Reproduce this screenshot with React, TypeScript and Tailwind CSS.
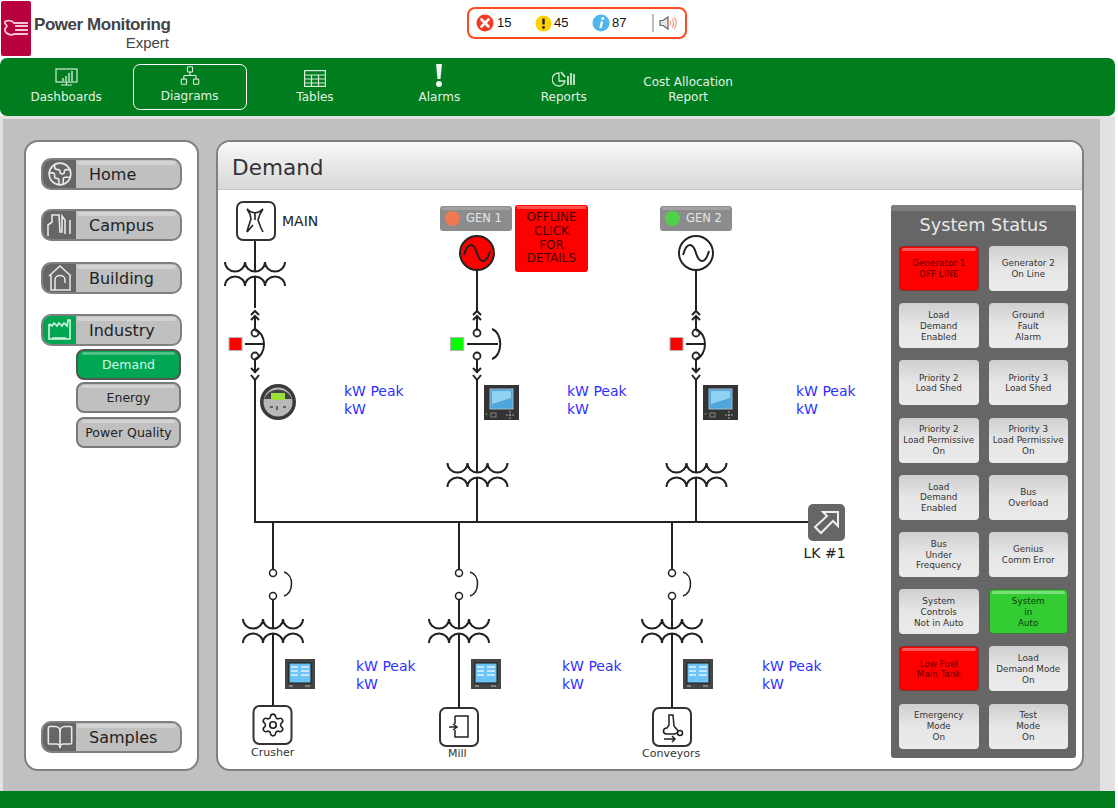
import { Settings, BookOpen, Earth, Network } from 'lucide-react';

const DEJA = 'font-["DejaVu_Sans",sans-serif]';

const SideIconCampus = () => (
  <svg width="26" height="24" viewBox="0 0 26 24" fill="none" stroke="#e8e8e8" strokeWidth="1.6">
    <path d="M1 23V12l4-3V2h7l1 17h2V3l3 4v14M23 7v14" />
  </svg>
);

const SideIconHouse = () => (
  <svg width="26" height="26" viewBox="0 0 26 26" fill="none" stroke="#e8e8e8" strokeWidth="1.5">
    <path d="M2 11 13 1l11 10M4 10v15h19V10M8 25V15c0-6 10-6 10 0v3" />
  </svg>
);

const SideIconFactory = () => (
  <svg width="26" height="24" viewBox="0 0 26 24" fill="none" stroke="#d8f5e2" strokeWidth="1.6">
    <path d="M2 6v15h21V2h-2l-1 6-3-3-2 3-3-3-2 3-3-3-2 3-3-2" />
    <path d="M5 20h14" />
  </svg>
);

const SideButton = ({ label, icon, active }: { label: string; icon: React.ReactNode; active?: boolean }) => (
  <div className="relative flex h-[32px] w-[141px] rounded-[10px] border-2 border-[#808080] bg-[#c0c0c0] overflow-hidden">
    <div className={`flex w-[33px] shrink-0 items-center justify-center ${active ? 'bg-[#00a651]' : 'bg-[#666666]'}`}>
      {icon}
    </div>
    <div className={`flex-1 pl-[13px] text-[16px] leading-[30px] text-[#222222] ${DEJA}`}>{label}</div>
    <div className="absolute left-[34px] right-[4px] top-[1px] h-[4px] rounded-sm bg-white/30" />
  </div>
);

const SubButton = ({ label, active, className }: { label: string; active?: boolean; className?: string }) => (
  <div
    className={`relative h-[31px] w-[105px] rounded-[8px] border-2 border-[#7a7a7a] text-center text-[12.5px] leading-[27px] ${DEJA} ${
      active ? 'bg-[#00a651] text-[#d5f5e0] border-[#555555]' : 'bg-[#c0c0c0] text-[#222222]'
    } ${className ?? ''}`}
  >
    {label}
    <div className="absolute left-[4px] right-[4px] top-[1px] h-[3px] rounded-sm bg-white/30" />
  </div>
);

const NavItem = ({ label, icon, selected }: { label: string; icon?: React.ReactNode; selected?: boolean }) => (
  <div className="flex h-[46px] w-[124.4px] justify-center">
    <div
      className={`flex h-[46px] w-[114px] flex-col items-center justify-end pb-[5px] text-[12px] leading-[15px] text-[#e4f2e4] ${DEJA} ${
        selected ? 'mr-[2px] rounded-[7px] border border-white pb-[4px]' : ''
      }`}
    >
      {icon}
      <span className="mt-[3px] text-center">{label}</span>
    </div>
  </div>
);

const Wire = (p: { d: string; w?: number }) => (
  <path d={p.d} fill="none" stroke="#222222" strokeWidth={p.w ?? 2} />
);

const Coil = ({ x, y }: { x: number; y: number }) => (
  <g>
    <Wire d={`M${x - 30} ${y}a10 9.5 0 0 0 20 0a10 9.5 0 0 0 20 0a10 9.5 0 0 0 20 0`} />
    <Wire d={`M${x - 30} ${y + 24}a10 9.5 0 0 1 20 0a10 9.5 0 0 1 20 0a10 9.5 0 0 1 20 0`} />
  </g>
);

// draw-out breaker, open swings the arc away from the line
const Breaker = ({ x, open }: { x: number; open?: boolean }) => (
  <g>
    <Wire d={`M${x - 4} 315l4-4l4 4M${x - 4} 320l4-4l4 4M${x} 316v13`} />
    <circle cx={x} cy={333} r={3.5} fill="#fff" stroke="#222222" strokeWidth={1.8} />
    <circle cx={x} cy={356} r={3.5} fill="#fff" stroke="#222222" strokeWidth={1.8} />
    {open ? (
      <>
        <Wire d={`M${x - 10} 344h31`} />
        <Wire d={`M${x + 15} 329c11 4 11 26 0 30`} />
      </>
    ) : (
      <>
        <Wire d={`M${x - 10} 344h18`} />
        <Wire d={`M${x} 330c12 3 12 25 0 29`} />
      </>
    )}
    <Wire d={`M${x} 360v13M${x - 4} 368l4 4l4-4M${x - 4} 375l4 5l4-5`} />
  </g>
);

const Disconnect = ({ x }: { x: number }) => (
  <g>
    <circle cx={x} cy={573} r={3.5} fill="#fff" stroke="#222222" strokeWidth={1.5} />
    <circle cx={x} cy={596} r={3.5} fill="#fff" stroke="#222222" strokeWidth={1.5} />
    <Wire d={`M${x + 11} 572c10 3 10 20 0 24`} w={1.5} />
  </g>
);

const Generator = ({ x, fill }: { x: number; fill: string }) => (
  <g>
    <circle cx={x} cy={253} r={17} fill={fill} stroke="#222222" strokeWidth={2} />
    <Wire d={`M${x - 13} 255c4-14 10-12 13-2s9 12 13-2`} />
  </g>
);

const StatusSquare = ({ x, fill }: { x: number; fill: string }) => (
  <rect x={x} y={337.5} width={13} height={13} fill={fill} stroke="#b5b5b5" strokeWidth={1} />
);

const LargeMeter = ({ x }: { x: number }) => (
  <g>
    <rect x={x} y={385} width={35} height={35} fill="#333333" />
    <rect x={x + 6} y={389} width={23} height={20} fill="#4fa6dc" stroke="#9fb8c8" strokeWidth={1} />
    <path d={`M${x + 8} 391h19v7l-19 6z`} fill="#93d1f2" />
    <rect x={x + 7} y={413} width={5} height={4} fill="none" stroke="#999999" strokeWidth={0.8} />
    <circle cx={x + 2.5} cy={414} r={0.8} fill="#66dd44" />
    <path d={`M${x + 22} 415h8M${x + 26} 411v8`} stroke="#aaaaaa" strokeWidth={1} strokeDasharray="2 1" />
  </g>
);

const SmallMeter = ({ x }: { x: number }) => (
  <g>
    <rect x={x} y={659} width={30} height={30} fill="#444444" />
    <rect x={x + 4} y={663} width={22} height={20} fill="#6cc3f5" stroke="#1a1a1a" strokeWidth={1} />
    <path
      d={`M${x + 6} 667h7M${x + 16} 667h8M${x + 6} 671h7M${x + 16} 671h8M${x + 6} 675h7M${x + 16} 675h8`}
      stroke="#e3f4ff"
      strokeWidth={1.3}
    />
    <path d={`M${x + 4} 686h4M${x + 20} 686h5`} stroke="#bbbbbb" strokeWidth={1} />
  </g>
);

const DeviceBox = ({ x, y }: { x: number; y: number }) => (
  <rect x={x} y={y} width={38} height={38} rx={6} fill="#fff" stroke="#333333" strokeWidth={2} />
);

const Diagram = () => (
  <svg className="absolute inset-0" width="864" height="578" viewBox="218 190 864 578">
    {/* bus and risers */}
    <Wire d="M255 240v31M255 277v31M255 380v142h553M477 270v41M477 380v92M477 478v44M696 270v41M696 380v92M696 478v44" />
    <Wire d="M273 522v48M273 600v28M273 634v72M459 522v48M459 600v28M459 634v74M672 522v48M672 600v28M672 634v74" />

    <DeviceBox x={237} y={202} />
    <Wire d="M247 209l3 5 1 5-3 9-1 4 6-7M263 209l-3 5-2 6 3 8 2 4M247 209c5 5 11 5 16 0M255 212v8" w={1.6} />

    <Coil x={255} y={262} />
    <Coil x={477.5} y={463} />
    <Coil x={696.5} y={463} />
    <Coil x={273} y={619} />
    <Coil x={459} y={619} />
    <Coil x={672} y={619} />

    <Breaker x={255} />
    <Breaker x={477} open />
    <Breaker x={696} />
    <StatusSquare x={229} fill="#ff0000" />
    <StatusSquare x={450.5} fill="#00ff00" />
    <StatusSquare x={670} fill="#ff0000" />

    <Generator x={477} fill="#ff0000" />
    <Generator x={696} fill="#ffffff" />

    <Disconnect x={273} />
    <Disconnect x={459} />
    <Disconnect x={672} />

    {/* round main meter */}
    <circle cx={278} cy={402} r={18} fill="#3a3a3a" />
    <circle cx={278} cy={402} r={14.5} fill="#b8b8b8" />
    <path d="M264 399a15 15 0 0 1 28 0z" fill="#444444" />
    <rect x={271} y={393} width={14} height={7} fill="#9be03a" />
    <path d="M270 407h3M277 406v4M283 407h3" stroke="#444444" strokeWidth={1.5} />

    <LargeMeter x={484} />
    <LargeMeter x={703} />
    <SmallMeter x={285} />
    <SmallMeter x={471} />
    <SmallMeter x={683} />

    <DeviceBox x={253.5} y={706} />
    <Settings x={260} y={712} size={26} strokeWidth={1.5} color="#222222" />
    <DeviceBox x={440} y={708} />
    <Wire d="M455 716h13v21h-13v-7M455 716v8M449 727h8M453 724l4 3-4 3" w={1.5} />
    <DeviceBox x={653} y={708} />
    <Wire d="M669 715h4l1 11 5 6-4 2h-9c-4-1-3-6 1-6l2-3zM664 739h11M672 736l3 3-3 3" w={1.5} />
    <circle cx={680} cy={733} r={2.5} fill="#fff" stroke="#222222" strokeWidth={1.5} />

    {/* LK tie */}
    <rect x={808} y={504} width={37} height={37} rx={5} fill="#666666" />
    <path d="M823 512h15v14l-5-5-12 12-6-6 12-11z" fill="none" stroke="#eeeeee" strokeWidth={2} />
  </svg>
);

const Reading = ({ className }: { className: string }) => (
  <div className={`absolute text-[14px] leading-[17.5px] text-[#2f2fff] ${DEJA} ${className}`}>
    kW Peak
    <br />
    kW
  </div>
);

const GenTag = ({ label, led, className }: { label: string; led: string; className: string }) => (
  <div
    className={`absolute flex h-[25px] w-[72px] items-center gap-[6px] rounded-[3px] bg-[#8c8c8c] pl-[5px] text-[11.5px] text-[#e6e6e6] ${DEJA} ${className}`}
  >
    <span className={`h-[15px] w-[15px] rounded-full ${led}`} />
    {label}
    <div className="absolute left-[2px] right-[2px] top-[1px] h-[3px] bg-white/20" />
  </div>
);

type Tone = 'plain' | 'red' | 'green';

const statusButtons: { text: string[]; tone?: Tone }[] = [
  { text: ['Generator 1', 'OFF LINE'], tone: 'red' },
  { text: ['Generator 2', 'On Line'] },
  { text: ['Load', 'Demand', 'Enabled'] },
  { text: ['Ground', 'Fault', 'Alarm'] },
  { text: ['Priority 2', 'Load Shed'] },
  { text: ['Priority 3', 'Load Shed'] },
  { text: ['Priority 2', 'Load Permissive', 'On'] },
  { text: ['Priority 3', 'Load Permissive', 'On'] },
  { text: ['Load', 'Demand', 'Enabled'] },
  { text: ['Bus', 'Overload'] },
  { text: ['Bus', 'Under', 'Frequency'] },
  { text: ['Genius', 'Comm Error'] },
  { text: ['System', 'Controls', 'Not in Auto'] },
  { text: ['System', 'in', 'Auto'], tone: 'green' },
  { text: ['Low Fuel', 'Main Tank'], tone: 'red' },
  { text: ['Load', 'Demand Mode', 'On'] },
  { text: ['Emergency', 'Mode', 'On'] },
  { text: ['Test', 'Mode', 'On'] },
];

const StatusButton = ({ text, tone = 'plain' }: { text: string[]; tone?: Tone }) => {
  const look =
    tone === 'red'
      ? 'bg-[#ff0000] text-[#600000] border border-[#8a2a2a]'
      : tone === 'green'
        ? 'bg-[#33cc33] text-[#0d3d0d] border border-[#3a7a3a]'
        : 'bg-gradient-to-b from-[#cfcfcf] via-[#e6e6e6] to-[#ebebeb] text-[#333333]';
  return (
    <div
      className={`relative flex h-[45px] flex-col items-center justify-center rounded-[4px] pt-[1px] text-center text-[8.8px] leading-[10.8px] ${DEJA} ${look}`}
    >
      {tone !== 'plain' && <div className="absolute left-[2px] right-[2px] top-[1px] h-[3px] rounded-sm bg-white/35" />}
      {text.map((t, i) => (
        <span key={i}>{t}</span>
      ))}
    </div>
  );
};

const App = () => {
  return (
    <div className="flex h-[808px] w-[1115px] flex-col bg-white">
      {/* Header */}
      <div className="flex h-[58px] shrink-0">
        <div className="flex w-[467px]">
          <div className="ml-[1px] mt-[1px] flex h-[55px] w-[30px] items-center justify-center rounded-[2px] bg-[#b8003f]">
            <svg width="26" height="22" viewBox="0 0 26 22" fill="none" stroke="#f4c6d4" strokeWidth="1.8">
              <path d="M25 5H11C9 2 3 2 2 4c-1 2 2 3 2 4s-3 2-2 5 7 5 9 3h14M12 8h13M12 12h13" />
            </svg>
          </div>
          <div className="ml-[3px] w-[135px] pt-[15px] text-right font-['Liberation_Sans',sans-serif] text-[#444444]">
            <div className="whitespace-nowrap text-left text-[17px] font-bold leading-[20px] tracking-[-0.45px]">Power Monitoring</div>
            <div className="text-[15px] leading-[15px]">Expert</div>
          </div>
        </div>
        <div className="mt-[7px] flex h-[32px] w-[220px] items-center rounded-[8px] border-2 border-[#ff4a1f] font-['Liberation_Sans',sans-serif] text-[13px] text-[#111111]">
          <svg className="ml-[7px]" width="18" height="18" viewBox="0 0 18 18">
            <circle cx="9" cy="9" r="8.5" fill="#f23a24" />
            <path d="M5.5 5.5l7 7M12.5 5.5l-7 7" stroke="#fff" strokeWidth="2.6" strokeLinecap="round" />
          </svg>
          <span className="ml-[3px] w-[38px]">15</span>
          <svg width="17" height="17" viewBox="0 0 17 17">
            <circle cx="8.5" cy="8.5" r="8" fill="#ffd200" />
            <path d="M8.5 3.5v6" stroke="#222" strokeWidth="2.4" />
            <circle cx="8.5" cy="12.5" r="1.4" fill="#222" />
          </svg>
          <span className="ml-[2px] w-[38px]">45</span>
          <svg width="18" height="18" viewBox="0 0 18 18">
            <circle cx="9" cy="9" r="8.5" fill="#4db6ea" />
            <path d="M10 7.5 8.5 14" stroke="#fff" strokeWidth="2.4" />
            <circle cx="10.8" cy="4.5" r="1.5" fill="#fff" />
          </svg>
          <span className="ml-[2px] w-[40px]">87</span>
          <span className="h-[18px] w-[2px] bg-[#bdbdbd]" />
          <svg className="ml-[4px]" width="20" height="18" viewBox="0 0 20 18" fill="none">
            <path d="M2 6.5h3L10 3v12l-5-3.5H2z" fill="#e4e4e4" stroke="#666666" strokeWidth="1.2" />
            <path d="M12 6.5c1 1.5 1 3.5 0 5M14 4.5c2 2.5 2 6.5 0 9M16 3c3 3.5 3 8.5 0 12" stroke="#f58a70" strokeWidth="1.1" />
          </svg>
        </div>
      </div>

      {/* Nav */}
      <div className="flex h-[58px] shrink-0 items-center rounded-[7px] bg-[#007d1e] pl-[4px]">
        <NavItem
          label="Dashboards"
          icon={
            <svg width="23" height="19" viewBox="0 0 23 19" fill="none" stroke="#d8ebd8" strokeWidth="1.2">
              <rect x="1" y="1" width="21" height="13" />
              <path d="M6 17h11M11.5 14v3" />
              <path d="M8 13v-3M11 13V8M14 13V5M17 13V3" strokeWidth="2" opacity="0.7" />
            </svg>
          }
        />
        <NavItem label="Diagrams" selected icon={<Network size={22} strokeWidth={1.2} color="#e4f2e4" />} />
        <NavItem
          label="Tables"
          icon={
            <svg width="22" height="17" viewBox="0 0 22 17" fill="none" stroke="#d8ebd8" strokeWidth="1.2">
              <rect x="0.6" y="0.6" width="20.8" height="15.8" />
              <path d="M0.6 5h20.8M0.6 9h20.8M0.6 13h20.8M7.5 5v11.4M14.5 5v11.4" />
            </svg>
          }
        />
        <NavItem
          label="Alarms"
          icon={
            <svg width="8" height="23" viewBox="0 0 8 23" fill="#f2f2f2">
              <path d="M1 0h6L5.5 15h-3z" />
              <circle cx="4" cy="20" r="3" />
            </svg>
          }
        />
        <NavItem
          label="Reports"
          icon={
            <svg width="23" height="16" viewBox="0 0 23 16" fill="none" stroke="#cfe6cf" strokeWidth="1.3">
              <path d="M7 2a6.5 6.5 0 1 0 6 8H7z" />
              <path d="M9 1l4 5M16 14V5M19 14V2M22 14V3" strokeWidth="1.8" />
            </svg>
          }
        />
        <NavItem label="Cost Allocation Report" />
      </div>

      {/* Main area */}
      <div className="flex min-h-0 flex-1 bg-[#e2e2e2] pl-[3px] pr-[15px] pt-[3px]">
        <div className="flex flex-1 gap-[17px] bg-[#c0c0c0] pb-[20px] pl-[21px] pr-[16px] pt-[21px]">
          {/* Side menu */}
          <div className="flex h-full w-[175px] shrink-0 flex-col rounded-[14px] border-2 border-[#808080] bg-white pb-[16px] pl-[15px] pt-[16px]">
            <SideButton label="Home" icon={<Earth size={26} strokeWidth={1.5} color="#e8e8e8" />} />
            <div className="mt-[19px]">
              <SideButton label="Campus" icon={<SideIconCampus />} />
            </div>
            <div className="mt-[21px]">
              <SideButton label="Building" icon={<SideIconHouse />} />
            </div>
            <div className="mt-[20px]">
              <SideButton label="Industry" active icon={<SideIconFactory />} />
            </div>
            <div className="ml-[35px] mt-[3px] flex flex-col gap-[2px]">
              <SubButton label="Demand" active />
              <SubButton label="Energy" />
              <SubButton label="Power Quality" className="mt-[2px]" />
            </div>
            <div className="mt-auto">
              <SideButton label="Samples" icon={<BookOpen size={28} strokeWidth={1.4} color="#e8e8e8" />} />
            </div>
          </div>

          {/* Diagram panel */}
          <div className="flex h-full flex-1 flex-col overflow-hidden rounded-[14px] border-2 border-[#808080] bg-white">
            <div className={`h-[48px] shrink-0 border-b border-[#c8c8c8] bg-gradient-to-b from-[#f8f8f8] to-[#d8d8d8] pl-[14px] text-[21.6px] leading-[52px] text-[#333333] ${DEJA}`}>
              Demand
            </div>
            <div className="relative flex flex-1 justify-end pb-[11px] pr-[6px] pt-[15px]">
              <Diagram />

              <div className={`absolute left-[64px] top-[21px] text-[14px] text-[#222222] ${DEJA}`}>MAIN</div>
              <GenTag label="GEN 1" led="bg-[#f2794f]" className="left-[222px] top-[16px]" />
              <GenTag label="GEN 2" led="bg-[#4fd04a]" className="left-[442px] top-[16px]" />
              <div className={`absolute left-[297px] top-[15px] flex h-[67px] w-[73px] flex-col items-center justify-center rounded-[3px] bg-[#ff0000] text-[12px] leading-[13.6px] text-[#4a0000] ${DEJA}`}>
                <div className="absolute left-[2px] right-[2px] top-[1px] h-[3px] bg-white/30" />
                <span>OFFLINE</span>
                <span>CLICK</span>
                <span>FOR</span>
                <span>DETAILS</span>
              </div>

              <Reading className="left-[126px] top-[193px]" />
              <Reading className="left-[349px] top-[193px]" />
              <Reading className="left-[578px] top-[193px]" />
              <Reading className="left-[138px] top-[468px]" />
              <Reading className="left-[344px] top-[468px]" />
              <Reading className="left-[544px] top-[468px]" />

              <div className={`absolute left-[585.5px] top-[352.5px] text-[14px] text-[#222222] ${DEJA}`}>LK #1</div>
              <div className={`absolute left-[33px] top-[555px] text-[11px] text-[#333333] ${DEJA}`}>Crusher</div>
              <div className={`absolute left-[230px] top-[556px] text-[11px] text-[#333333] ${DEJA}`}>Mill</div>
              <div className={`absolute left-[424px] top-[556px] text-[11px] text-[#333333] ${DEJA}`}>Conveyors</div>

              {/* System status */}
              <div className="relative flex w-[185px] flex-col rounded-[3px] bg-[#666666] px-[8px]">
                <div className="absolute inset-x-0 top-0 h-[6px] rounded-t-[3px] bg-[#7e7e7e]" />
                <div className={`h-[41px] pt-[8px] text-center text-[17.7px] leading-[24px] text-[#e8e8e8] ${DEJA}`}>System Status</div>
                <div className="grid grid-cols-2 gap-x-[10px] gap-y-[12.2px]">
                  {statusButtons.map((b, i) => (
                    <StatusButton key={i} text={b.text} tone={b.tone} />
                  ))}
                </div>
              </div>
            </div>
          </div>
        </div>
      </div>

      {/* Footer */}
      <div className="h-[17px] shrink-0 bg-[#007d1e]" />
    </div>
  );
};

export default App;
